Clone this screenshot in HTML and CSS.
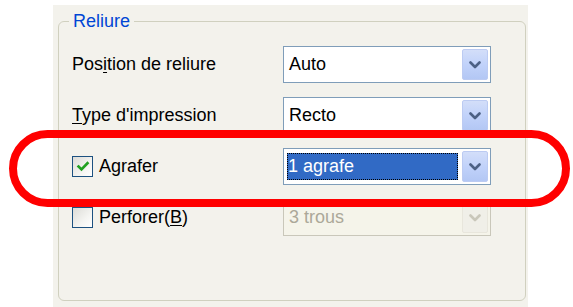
FILE: index.html
```html
<!DOCTYPE html>
<html lang="fr">
<head>
<meta charset="utf-8">
<title>Reliure</title>
<link rel="stylesheet" href="styles.css">
</head>
<body>
<div class="page">
  <div class="panel">
    <fieldset class="group">
      <legend class="legend">Reliure</legend>
      <div class="rows">
        <div class="row">
          <span class="label">Pos<span class="u">i</span>tion de reliure</span>
          <div class="combo">
            <span class="value">Auto</span>
            <span class="btn"><svg viewBox="0 0 12 8" width="12" height="8"><path d="M1.5 1.5 L6 6 L10.5 1.5" fill="none" stroke="#4d6185" stroke-width="2.6" stroke-linecap="round" stroke-linejoin="round"/></svg></span>
          </div>
        </div>
        <div class="row">
          <span class="label"><span class="u">T</span>ype d'impression</span>
          <div class="combo">
            <span class="value">Recto</span>
            <span class="btn"><svg viewBox="0 0 12 8" width="12" height="8"><path d="M1.5 1.5 L6 6 L10.5 1.5" fill="none" stroke="#4d6185" stroke-width="2.6" stroke-linecap="round" stroke-linejoin="round"/></svg></span>
          </div>
        </div>
        <div class="row">
          <span class="label check-label">
            <span class="checkbox"><svg viewBox="0 0 14 14" width="14" height="14"><path d="M2.5 6.5 L5.5 9.5 L11.5 3.2" fill="none" stroke="#21a121" stroke-width="2.6" stroke-linecap="square"/></svg></span>
            <span>Agrafer</span>
          </span>
          <div class="combo">
            <span class="value selected">1 agrafe</span>
            <span class="btn"><svg viewBox="0 0 12 8" width="12" height="8"><path d="M1.5 1.5 L6 6 L10.5 1.5" fill="none" stroke="#4d6185" stroke-width="2.6" stroke-linecap="round" stroke-linejoin="round"/></svg></span>
          </div>
        </div>
        <div class="row">
          <span class="label check-label">
            <span class="checkbox"></span>
            <span>Perforer(<span class="u">B</span>)</span>
          </span>
          <div class="combo disabled">
            <span class="value">3 trous</span>
            <span class="btn"><svg viewBox="0 0 12 8" width="12" height="8"><path d="M1.5 1.5 L6 6 L10.5 1.5" fill="none" stroke="#c9c7ba" stroke-width="2.6" stroke-linecap="round" stroke-linejoin="round"/></svg></span>
          </div>
        </div>
      </div>
    </fieldset>
  </div>
  <div class="highlight"></div>
</div>
</body>
</html>
```

FILE: styles.css
```css
html, body {
  margin: 0;
  padding: 0;
  background: #ffffff;
}

.page {
  position: relative;
  width: 573px;
  height: 307px;
  overflow: hidden;
  font-family: "Liberation Sans", Arial, sans-serif;
  font-size: 18px;
  color: #000;
}

.panel {
  margin: 5px 0 0 53px;
  width: 475px;
  height: 302px;
  background: #f3f2ec;
  padding: 6px 0 0 5px;
  box-sizing: border-box;
}

.group {
  margin: 0;
  width: 468px;
  height: 290px;
  box-sizing: border-box;
  border: 1px solid #d0d0bf;
  border-radius: 6px;
  padding: 0 0 0 10px;
}

.legend {
  padding: 0 4px;
  color: #0046d5;
  line-height: 21px;
}

.rows {
  margin: 14px 0 0 3px;
  display: flex;
  flex-direction: column;
  gap: 14px;
}

.row {
  display: flex;
  align-items: center;
  height: 37px;
}

.label {
  width: 211px;
  flex: none;
}

.u {
  text-decoration: underline;
  text-underline-offset: 2px;
}

.check-label {
  display: flex;
  align-items: center;
  gap: 6px;
}

.checkbox {
  width: 21px;
  height: 21px;
  box-sizing: border-box;
  border: 1px solid #1c5180;
  background: linear-gradient(135deg, #dcdcd7 0%, #f4f4f1 60%, #ffffff 100%);
  display: flex;
  align-items: center;
  justify-content: center;
}

.combo {
  width: 208px;
  height: 37px;
  box-sizing: border-box;
  border: 1px solid #7f9db9;
  background: #ffffff;
  display: flex;
  align-items: center;
  padding: 2px;
  gap: 4px;
}

.value {
  flex: 1;
  padding-left: 3px;
  line-height: 27px;
}

.value.selected {
  margin-left: 1px;
  padding-left: 1px;
  background: #316ac5;
  color: #ffffff;
  outline: 1px dotted #000;
  outline-offset: -1px;
}

.btn {
  width: 26px;
  height: 31px;
  flex: none;
  box-sizing: border-box;
  border: 1px solid #bccbf2;
  border-radius: 2px;
  background: linear-gradient(180deg, #d3def9 0%, #c1d2fa 50%, #b3c7f4 100%);
  display: flex;
  align-items: center;
  justify-content: center;
}

.combo.disabled {
  border-color: #c9c7ba;
  background: #f5f4ea;
}

.combo.disabled .value {
  color: #aca899;
}

.combo.disabled .btn {
  border-color: #e8e6dc;
  background: #f0efe8;
}

.highlight {
  position: absolute;
  left: 9px;
  top: 130px;
  width: 561px;
  height: 77px;
  box-sizing: border-box;
  border: 8px solid #ff0000;
  border-radius: 39px;
}
```
